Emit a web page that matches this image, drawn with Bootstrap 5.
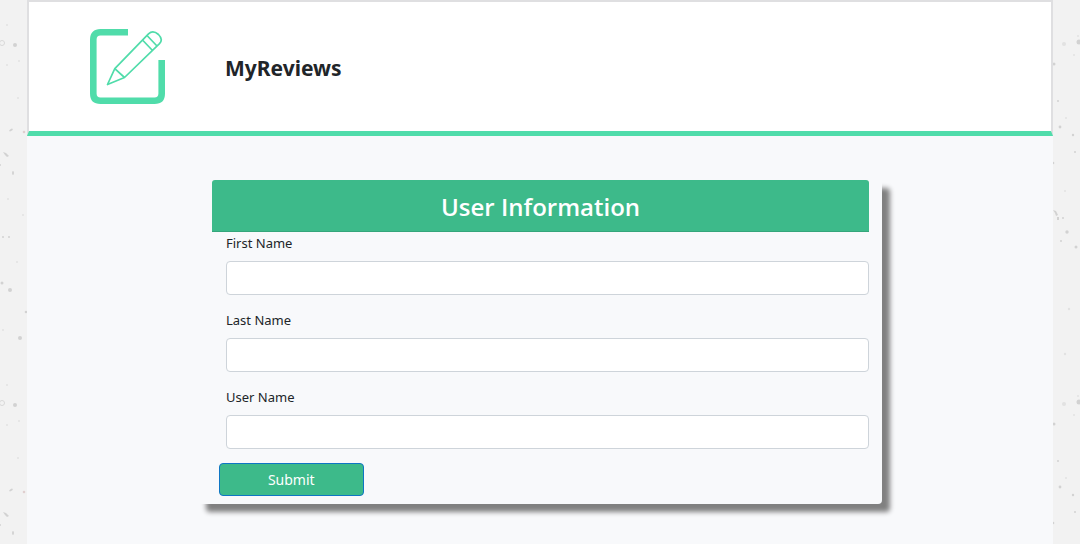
<!DOCTYPE html>
<html lang="en">
<head>
<meta charset="utf-8">
<meta name="viewport" content="width=device-width, initial-scale=1">
<title>MyReviews</title>
<link href="https://cdn.jsdelivr.net/npm/bootstrap@5.3.0/dist/css/bootstrap.min.css" rel="stylesheet">
<style>
  body { background: #f2f2f2; font-family: "Segoe UI", "Noto Sans", sans-serif; font-size: 14px; line-height: 21px; color: #212529; }
  .paper { position: fixed; inset: 0; z-index: -1; }
  .page { width: 95%; background: #f8f9fb; }
  .site-header { padding: 27px 61px; border: 2px solid #dfdfe1; border-bottom: 5px solid #50dcaa; gap: 60px; }
  .site-title { padding-top: 2px; font-family: "Segoe UI", "Noto Sans", sans-serif; font-size: 21px; line-height: 30px; }
  .user-card { margin-top: 44px; padding: 0 13px 8px 14px; border-radius: 4px; background: #f8f9fb; box-shadow: 8px 8px 5px #808080; }
  .user-card-title { padding: 11px 10px 9px; font-family: "Segoe UI", "Open Sans", sans-serif; font-size: 24px; font-weight: 600; line-height: 31px; background: #3dba8a; border-bottom: 1px solid #35a67b; border-radius: 3px 3px 0 0; }
  .fields { padding-left: 14px; }
  .fields .form-label { display: block; font-size: 13px; line-height: 23px; margin-bottom: 6px; }
  .fields .form-control { height: 34px; border-color: #ced4da; border-radius: 4px; font-size: 14px; }
  .field-group { margin-bottom: 14px; }
  .btn-send { width: 22%; margin-left: 7px; padding: 5px; font-size: 14px; line-height: 21px; color: #fff; background: #3dba8a; border-color: #0f76c4; border-radius: 4px; }
  .btn-send:hover { color: #fff; background: #35a67b; }
</style>
</head>
<body>
<svg class="paper" width="100%" height="100%" aria-hidden="true">
  <defs>
    <pattern id="specks" width="1080" height="360" patternUnits="userSpaceOnUse">
      <g fill="#d2d2d2">
        <ellipse cx="11" cy="130" rx="2" ry="1" transform="rotate(-30 11 130)"/>
        <circle cx="24" cy="132" r="1.3" fill="#e0cfcf"/>
        <path d="M3 152l3 1 3 3-2 1-2-2z"/>
        <ellipse cx="13" cy="173" rx="1" ry="2"/>
        <circle cx="0" cy="165" r="1"/><circle cx="3" cy="237" r="1"/><circle cx="9" cy="237" r="1"/>
        <circle cx="2" cy="283" r="1.5"/><circle cx="10" cy="290" r="2"/><circle cx="26" cy="312" r="1.3"/>
        <circle cx="20" cy="338" r="2"/><circle cx="15" cy="45" r="2"/>
        <circle cx="2" cy="43" r="2.5" fill="none" stroke="#d8d8d8"/>
        <circle cx="1054" cy="64" r="1.5"/><circle cx="1058" cy="101" r="1"/><circle cx="1060" cy="127" r="1.4"/>
        <circle cx="1073" cy="135" r="1.2"/><circle cx="1075" cy="152" r="1"/><circle cx="1053" cy="163" r="1.3"/>
        <path d="M1053 210l3 1 2 4-2 1-1-3zM1057 217h2v3h-2z"/><circle cx="1063" cy="218" r="1"/>
        <circle cx="1067" cy="232" r="1.7"/><circle cx="1061" cy="241" r="1"/><circle cx="1076" cy="247" r="1.5"/><circle cx="1079" cy="42" r="2.5"/>
      </g>
      <g fill="#e2e2e2">
        <circle cx="8" cy="199" r="1"/><circle cx="23" cy="215" r="1"/><circle cx="17" cy="262" r="1"/>
        <circle cx="3" cy="330" r="1"/><circle cx="7" cy="25" r="1"/><circle cx="7" cy="65" r="1"/>
        <circle cx="19" cy="61" r="1"/><circle cx="18" cy="98" r="1"/><circle cx="1064" cy="44" r="2"/>
        <circle cx="1066" cy="118" r="1"/><circle cx="1065" cy="191" r="1"/>
        <circle cx="1069" cy="309" r="1.2"/><circle cx="1065" cy="354" r="1.2"/><circle cx="1078" cy="36" r="1"/>
        <circle cx="1074" cy="55" r="1"/>
      </g>
    </pattern>
  </defs>
  <rect width="100%" height="100%" fill="url(#specks)"/>
</svg>
<div class="page mx-auto min-vh-100">
  <header class="site-header d-flex align-items-center bg-white">
    <svg width="75" height="75" viewBox="0 0 75 75" fill="none" stroke="#50dcaa" aria-hidden="true">
      <path d="M38 3.3H10.500Q3.300 3.300 3.300 10.500V64.500Q3.300 71.700 10.500 71.700H64.500Q71.700 71.700 71.700 64.500V31" stroke-width="6.600"/>
      <path d="M17.500 55.500L24.800 39.700 58.500 4.800Q63 .8 68.500 5.500 73.500 10.500 69.500 14.700L34.500 48.500ZM24.800 39.700L34.500 48.500M52.500 11L62.500 21.500M57 6.500L67 17" stroke-width="1.700" stroke-linejoin="round"/>
    </svg>
    <h1 class="site-title fw-bold mb-0">MyReviews</h1>
  </header>
  <main class="container-fluid px-0">
    <div class="row g-0 justify-content-center">
      <div class="col-8">
        <form class="user-card">
          <h2 class="user-card-title text-white text-center mb-0">User Information</h2>
          <div class="fields">
            <div class="field-group">
              <label class="form-label" for="firstName">First Name</label>
              <input class="form-control" type="text" id="firstName">
            </div>
            <div class="field-group">
              <label class="form-label" for="lastName">Last Name</label>
              <input class="form-control" type="text" id="lastName">
            </div>
            <div class="field-group">
              <label class="form-label" for="userName">User Name</label>
              <input class="form-control" type="text" id="userName">
            </div>
          </div>
          <button class="btn btn-send" type="submit">Submit</button>
        </form>
      </div>
    </div>
  </main>
</div>
<script src="https://cdn.jsdelivr.net/npm/bootstrap@5.3.0/dist/js/bootstrap.bundle.min.js"></script>
</body>
</html>
